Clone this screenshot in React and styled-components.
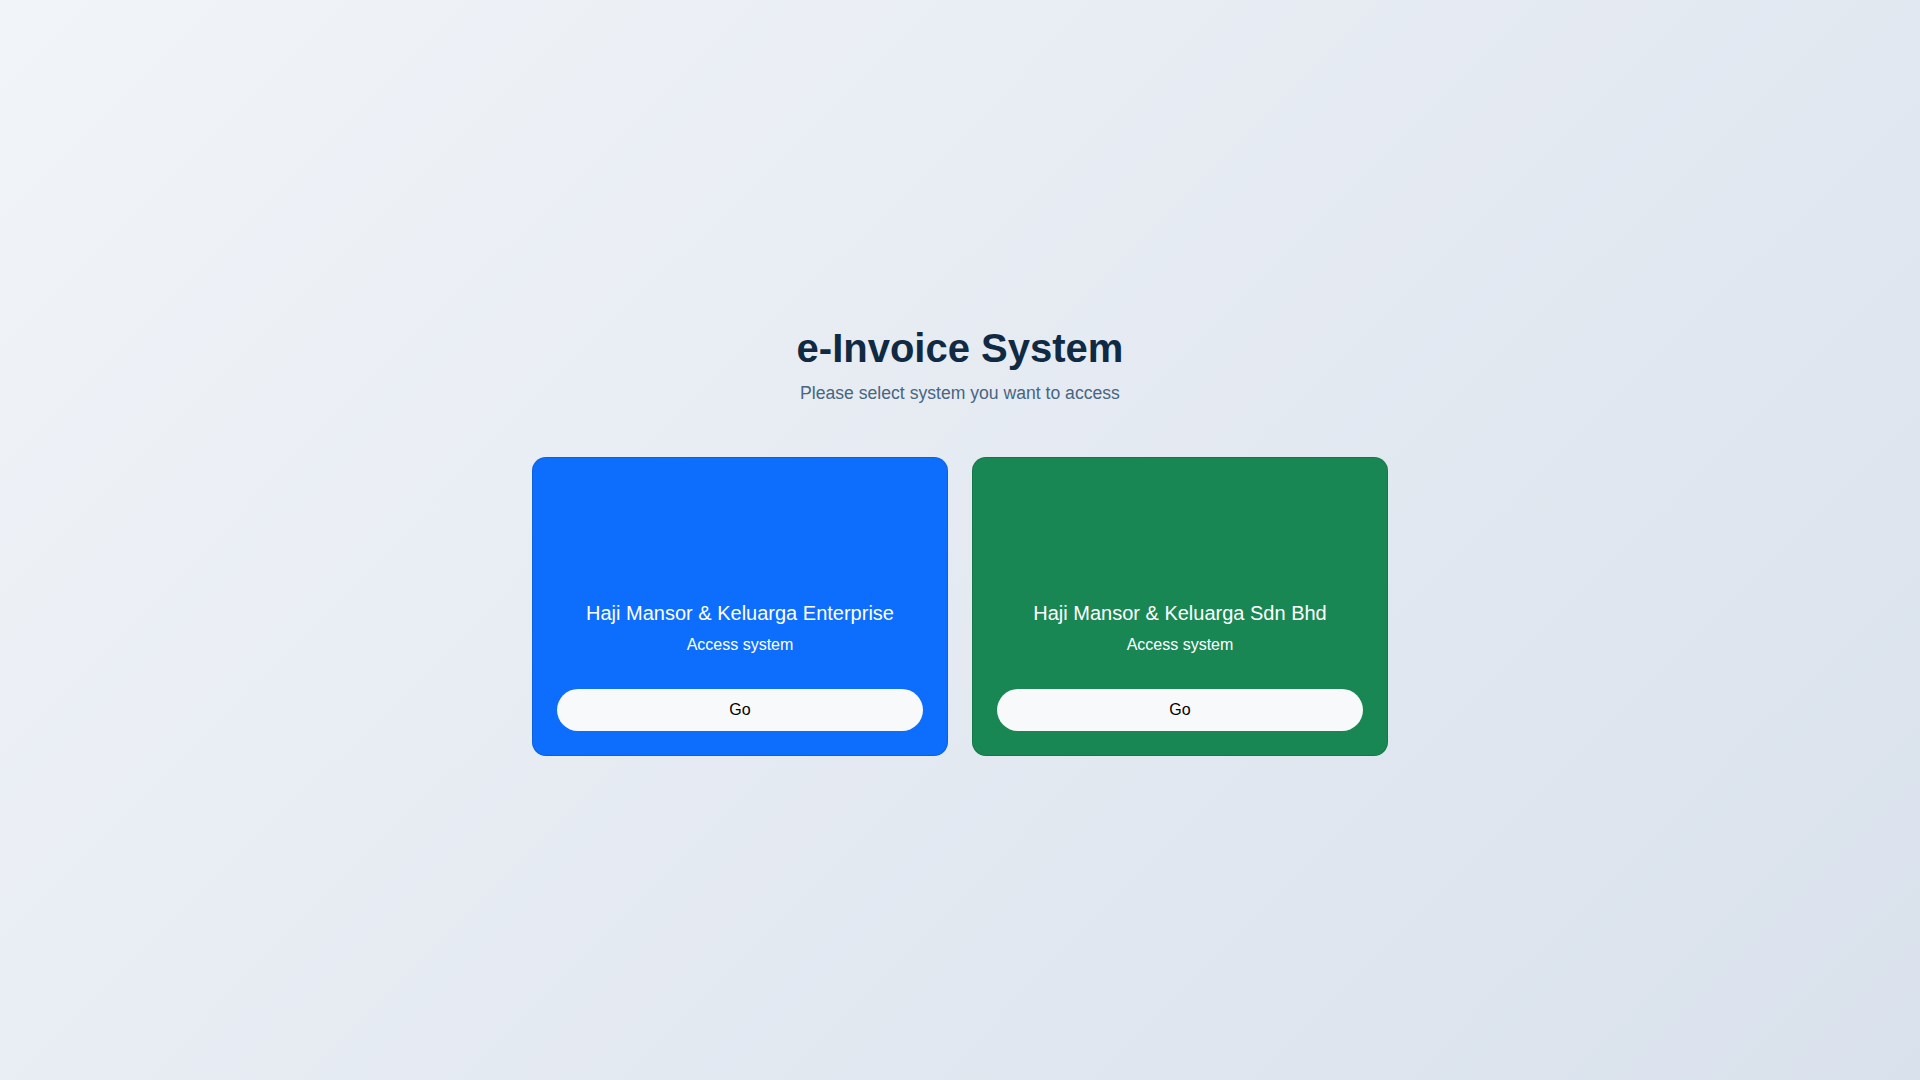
import React from "react";
import styled, { createGlobalStyle } from "styled-components";

/* ---------- global ---------- */

const GlobalStyle = createGlobalStyle`
  * { box-sizing: border-box; }
  html, body { margin: 0; padding: 0; }
  body {
    font-family: "Liberation Sans", Arial, sans-serif;
    background: linear-gradient(135deg, #f1f4f8 0%, #d9e1ec 100%);
    min-height: 100vh;
  }
`;

/* ---------- styled components ---------- */

const Page = styled.div`
  min-height: 100vh;
  display: flex;
  align-items: center;
  justify-content: center;
`;

const Wrapper = styled.div`
  width: 856px;
  display: flex;
  flex-direction: column;
  align-items: center;
`;

const Title = styled.h1`
  margin: 0 0 8px;
  font-size: 40px;
  line-height: 48px;
  font-weight: 700;
  color: #102a43;
`;

const Subtitle = styled.p`
  margin: 0 0 51px;
  font-size: 17.6px;
  line-height: 26.4px;
  color: #486581;
`;

const CardGrid = styled.div`
  width: 100%;
  display: grid;
  grid-template-columns: 1fr 1fr;
  gap: 24px;
`;

const Card = styled.div`
  background: ${({ $color }) => $color};
  border: 1px solid rgba(0, 0, 0, 0.12);
  border-radius: 14px;
  padding: 24px;
  display: flex;
  flex-direction: column;
  align-items: center;
  color: #fff;
  text-align: center;
`;

const IconSlot = styled.div`
  height: 95px;
  margin-bottom: 24px;
`;

const CardTitle = styled.h5`
  margin: 0 0 8px;
  font-size: 20px;
  line-height: 24px;
  font-weight: 400;
`;

const CardText = styled.p`
  margin: 0 0 32px;
  font-size: 16px;
  line-height: 24px;
`;

const GoButton = styled.button`
  width: 100%;
  height: 42px;
  border: none;
  border-radius: 50px;
  background: #f8f9fa;
  color: #000;
  font-family: inherit;
  font-size: 16px;
  cursor: pointer;
`;

/* ---------- data ---------- */

const systems = [
  { name: "Haji Mansor & Keluarga Enterprise", color: "#0d6efd" },
  { name: "Haji Mansor & Keluarga Sdn Bhd", color: "#198754" },
];

/* ---------- component ---------- */

const App = () => (
  <>
    <GlobalStyle />
    <Page>
      <Wrapper>
        <Title>e-Invoice System</Title>
        <Subtitle>Please select system you want to access</Subtitle>
        <CardGrid>
          {systems.map((s) => (
            <Card key={s.name} $color={s.color}>
              <IconSlot />
              <CardTitle>{s.name}</CardTitle>
              <CardText>Access system</CardText>
              <GoButton>Go</GoButton>
            </Card>
          ))}
        </CardGrid>
      </Wrapper>
    </Page>
  </>
);

export default App;
